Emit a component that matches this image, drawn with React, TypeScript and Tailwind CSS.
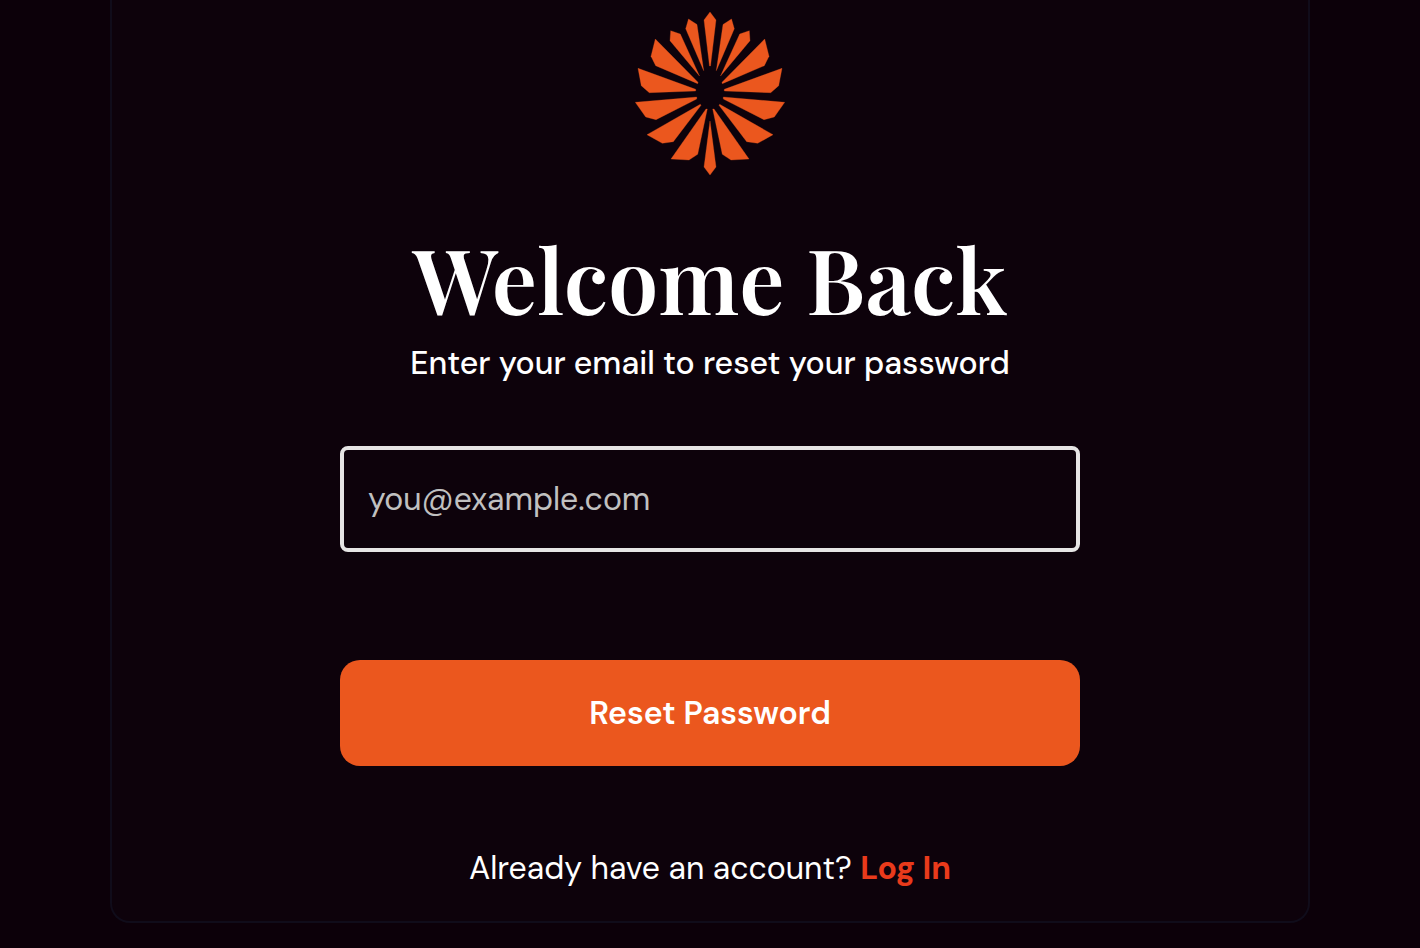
const petals = [
  '53.5,7 62,12.5 68.7,58.7 50.7,16.7',
  '35.7,18.7 45.3,22 64.5,64 35,28.7',
  '20.3,27 63,70.3 62.7,71.7 20.7,53.7 16,44.3',
  '3,56.3 60.7,77.3 60.7,79 14.3,80.7 6.3,73.7',
  '0.3,90.3 61.7,85 61.7,87 21,107.7 10.7,105',
  '12,122.7 65.3,92.3 66,93.3 38.3,129.7 27.3,131.3',
  '36,147 71,97 72.3,97 62.7,142.3 54,148',
];

function Petals() {
  return (
    <>
      {petals.map((points) => (
        <polygon key={points} points={points} />
      ))}
    </>
  );
}

function Logo() {
  return (
    <svg
      viewBox="0 0 150 163"
      className="mx-auto h-[163px] w-[150px] fill-[#eb571e] stroke-[#eb571e]"
      strokeWidth="0.3"
      role="img"
      aria-label="Logo"
    >
      <polygon points="75,0 81,8 75.5,54 74.5,54 69,8" />
      <Petals />
      <g transform="translate(150 0) scale(-1 1)">
        <Petals />
      </g>
      <polygon points="75,109 81,155 75,163 69,155" />
    </svg>
  );
}

export default function App() {
  return (
    <main className="min-h-screen bg-[#0c0009] px-6 pb-6 font-['DM_Sans',Inter,sans-serif] text-white">
      <section
        aria-labelledby="reset-heading"
        className="mx-auto max-w-[1200px] rounded-b-[20px] border-x-2 border-b-2 border-[#100c1a] bg-[#0d020b] px-6 pt-3 pb-[29px]"
      >
        <Logo />

        <div className="mx-auto max-w-[740px] text-center">
          <h1
            id="reset-heading"
            className="mt-[55px] font-['Playfair_Display','Liberation_Serif',serif] text-[90px] leading-[96px] font-semibold"
          >
            Welcome Back
          </h1>
          <p className="mt-[13px] text-[32px] leading-[48px] font-medium">
            Enter your email to reset your password
          </p>

          <form className="mt-[59px]" onSubmit={(e) => e.preventDefault()}>
            <input
              id="email"
              name="email"
              type="email"
              autoComplete="email"
              aria-label="Email"
              placeholder="you@example.com"
              className="block h-[106px] w-full rounded-lg border-4 border-[#e6e5e5] bg-transparent px-6 text-[32px] placeholder:text-[#c0c0c0] focus:outline-none"
            />
            <button
              type="submit"
              className="mt-[108px] block h-[106px] w-full rounded-[20px] bg-[#eb571e] text-[32px] font-semibold hover:bg-[#d94e18]"
            >
              Reset Password
            </button>
          </form>

          <p className="mt-[78px] text-[32px] leading-[48px]">
            Already have an account?{' '}
            <a href="#login" className="font-bold text-[#e93a1b]">
              Log In
            </a>
          </p>
        </div>
      </section>
    </main>
  );
}
